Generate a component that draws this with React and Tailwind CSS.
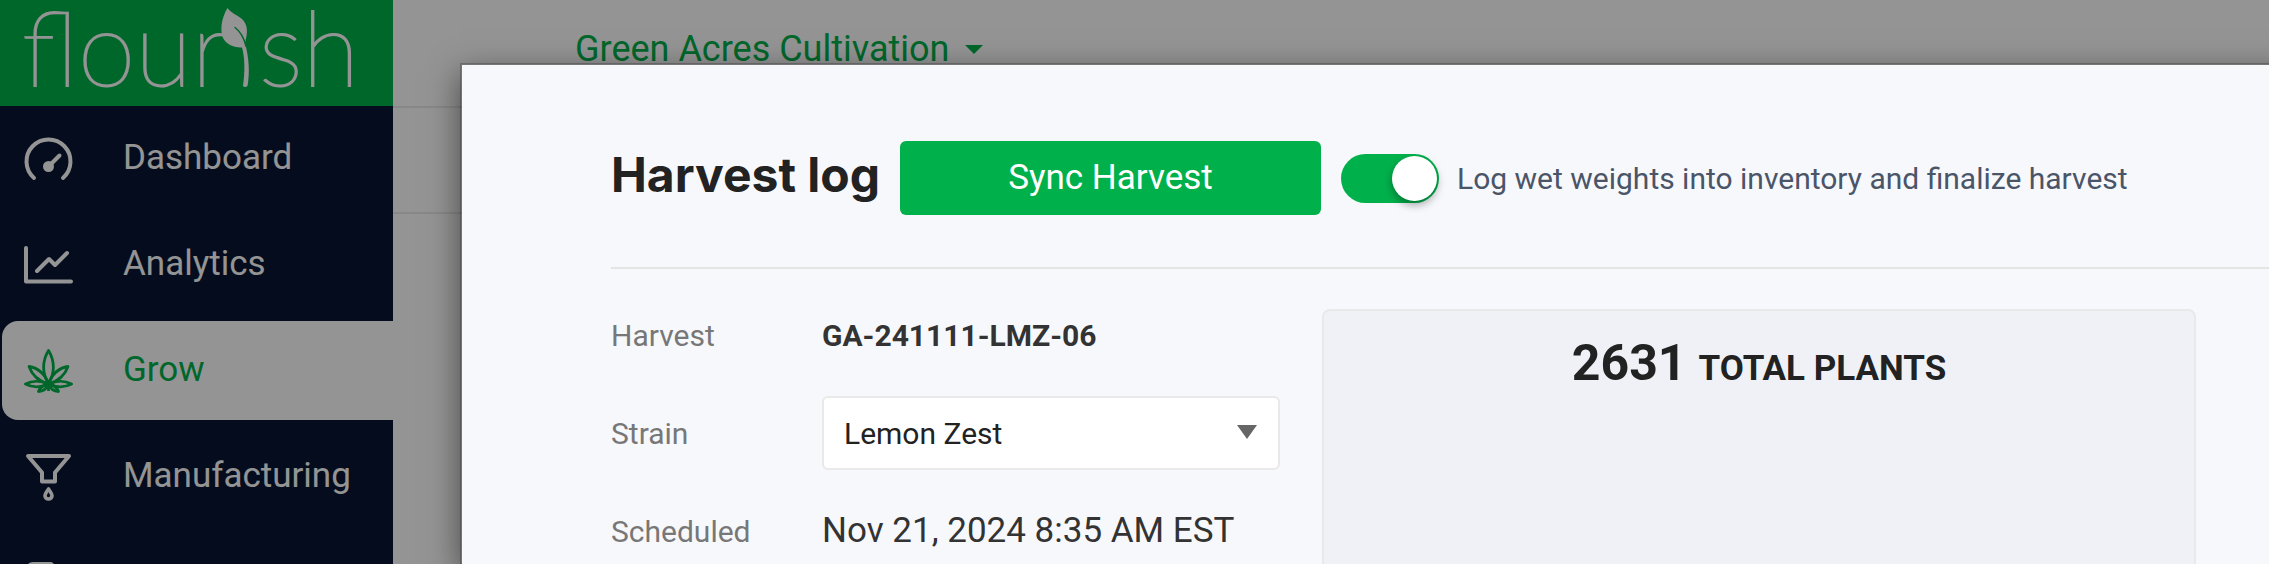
import { useState } from "react";

const GaugeIcon = () => (
  <svg width="49" height="44" viewBox="0 0 49 44" fill="none" stroke="currentColor" strokeWidth="4" strokeLinecap="round">
    <path d="M10 41 A22 22 0 1 1 39 41" />
    <path d="M25 29 L35.5 18.5" />
    <circle cx="24.5" cy="29.5" r="5.5" fill="currentColor" stroke="none" />
  </svg>
);

const ChartIcon = () => (
  <svg width="49" height="38" viewBox="0 0 49 38" fill="none" stroke="currentColor" strokeWidth="4" strokeLinecap="round" strokeLinejoin="round">
    <path d="M2 2 V35.5 H47" />
    <path d="M13 25 L25 13 L31 19 L43 7" />
  </svg>
);

const LeafIcon = () => (
  <svg width="49" height="44" viewBox="0 0 49 44" fill="none" stroke="currentColor" strokeWidth="2.8" strokeLinejoin="round">
    <path d="M24.5 34 C18 25 18 12 24.5 1.5 C31 12 31 25 24.5 34Z" />
    <path d="M24.5 35 C14 32 8 26 5 17.5 C14 19 21 25 24.5 35Z" />
    <path d="M24.5 35 C35 32 41 26 44 17.5 C35 19 28 25 24.5 35Z" />
    <path d="M24.5 35 C17 39 8 38.5 1.5 35 C8 31.5 17 31.5 24.5 35Z" />
    <path d="M24.5 35 C32 39 41 38.5 47.5 35 C41 31.5 32 31.5 24.5 35Z" />
    <path d="M24.5 35 C19 36 16 38.5 14.5 42.5 C19 42.5 22.5 40 24.5 35Z" />
    <path d="M24.5 35 C30 36 33 38.5 34.5 42.5 C30 42.5 26.5 40 24.5 35Z" />
    <path d="M24.5 31 V42" />
    <circle cx="24.5" cy="35" r="3.5" fill="currentColor" stroke="none" />
  </svg>
);

const FunnelIcon = () => (
  <svg width="49" height="48" viewBox="0 0 49 48" fill="none" stroke="currentColor" strokeWidth="4" strokeLinejoin="round">
    <path d="M4 3 H45 L31 19.5 V28.5 H18 V19.5 Z" />
    <path d="M24.5 36 C22 39.5 21 41 21 42.8 A3.5 3.2 0 0 0 28 42.8 C28 41 27 39.5 24.5 36Z" strokeWidth="3.6" />
  </svg>
);

const DocumentIcon = () => (
  <svg width="49" height="44" viewBox="0 0 49 44" fill="none" stroke="currentColor" strokeWidth="4" strokeLinejoin="round">
    <path d="M5 42 V7 Q5 3 9 3 H27 L36 12 V42 Z" />
  </svg>
);

const Logo = () => (
  <svg width="393" height="106" viewBox="0 0 393 106" role="img" aria-label="flourish" className="block fill-white font-['Lato'] text-[104px] font-thin">
    <g stroke="#fff" strokeWidth="2">
      <text x="22" y="86">flour</text>
      <text x="259" y="86">sh</text>
    </g>
    <path d="M227.500 8 C221 19 220 30 223 38 C226 44 234 48 242 47.500 C245 58 245 72 243 86 Q245 88 247.500 86 C250 72 249 58 245 43 C248 32 248 25 242 19 C237 15 231 13 227.500 8Z" />
    <path d="M235 27.500 C241 32 244 38 246 46" fill="none" stroke="#00b14b" strokeWidth="1.500" strokeLinecap="round" />
  </svg>
);

const navItems = [
  { label: "Dashboard", Icon: GaugeIcon },
  { label: "Analytics", Icon: ChartIcon },
  { label: "Grow", Icon: LeafIcon, active: true },
  { label: "Manufacturing", Icon: FunnelIcon },
  { label: "", Icon: DocumentIcon },
];

const Sidebar = () => (
  <aside className="w-[393px] shrink-0 bg-[#071632] text-white">
    <a href="#home" className="block h-[106px] bg-[#00b14b]">
      <Logo />
    </a>
    <nav className="flex flex-col gap-[7px] pt-[3px] pl-0.5">
      {navItems.map(({ label, Icon, active }, i) => (
        <a
          key={i}
          href="#nav"
          className={`flex h-[99px] items-center gap-[50px] rounded-l-2xl pl-[22px] text-[35px] ${
            active ? "bg-white text-[#00b14b]" : ""
          }`}
        >
          <Icon />
          <span>{label}</span>
        </a>
      ))}
    </nav>
  </aside>
);

const HarvestModal = () => {
  const [finalize, setFinalize] = useState(true);
  const [strain, setStrain] = useState("Lemon Zest");

  return (
    <div role="dialog" aria-labelledby="harvest-title" className="-mr-16 grow border-t-2 border-l-2 border-black/20 bg-[#f7f8fc] bg-clip-padding pt-[76px] pl-[149px] shadow-[0_10px_30px_rgba(0,0,0,0.5)]">
      <header className="flex items-center border-b-2 border-[#e4e4e4] pb-[52px]">
        <h1 id="harvest-title" className="mr-5 w-[269px] pb-1.5 font-['Inter'] text-[48px] leading-none font-bold whitespace-nowrap text-[#222]">
          Harvest log
        </h1>
        <button className="h-[74px] w-[421px] rounded-md bg-[#00b14b] text-[35px] text-white">
          Sync Harvest
        </button>
        <label className="ml-5 flex items-center gap-[18px] text-[30px] whitespace-nowrap text-[#4a5568]">
          <input type="checkbox" checked={finalize} onChange={(e) => setFinalize(e.target.checked)} className="peer sr-only" />
          <span className="flex h-[49px] w-[98px] justify-start rounded-full bg-gray-400 p-0.5 peer-checked:justify-end peer-checked:bg-[#00b14b]">
            <span className="size-[45px] rounded-full bg-white shadow-[0_4px_8px_rgba(0,0,0,0.35)]" />
          </span>
          Log wet weights into inventory and finalize harvest
        </label>
      </header>

      <div className="flex gap-[42px] pt-[17px] pr-[137px]">
        <dl className="w-[669px] shrink-0 text-[30px] text-[#333]">
          <div className="flex h-[98px] items-center">
            <dt className="w-[211px] text-[#777]">Harvest</dt>
            <dd className="font-bold">GA-241111-LMZ-06</dd>
          </div>
          <div className="flex h-[98px] items-center">
            <dt className="w-[211px] text-[#777]">
              <label htmlFor="strain">Strain</label>
            </dt>
            <dd className="relative grow">
              <select
                id="strain"
                value={strain}
                onChange={(e) => setStrain(e.target.value)}
                className="block h-[74px] w-full appearance-none rounded-md border-2 border-[#e9e9e9] bg-white px-5 text-[#222]"
              >
                <option>Lemon Zest</option>
              </select>
              <svg width="20" height="14" viewBox="0 0 20 14" className="pointer-events-none absolute top-[29px] right-[23px] fill-[#666]">
                <path d="M0 0 H20 L10 14Z" />
              </svg>
            </dd>
          </div>
          <div className="flex h-[98px] items-center">
            <dt className="w-[211px] text-[#777]">Scheduled</dt>
            <dd className="text-[35px]">Nov 21, 2024 8:35 AM EST</dd>
          </div>
        </dl>

        <section className="mt-[23px] h-[400px] grow rounded-lg border-2 border-[#e9e9e9] bg-[#eff1f6] pt-[15px] text-center font-bold text-[#222]">
          <span className="text-[50px]">2631</span>{" "}
          <span className="ml-2 text-[35px]">TOTAL PLANTS</span>
        </section>
      </div>
    </div>
  );
};

const App = () => (
  <div className="relative flex h-screen overflow-hidden bg-white font-['Roboto',sans-serif]">
    <Sidebar />
    <main className="grow">
      <div className="h-[108px] border-b-2 border-[#ebebeb] pt-[22px] pl-[182px]">
        <button className="flex items-center gap-4 text-[36px] text-[#00b14b]">
          Green Acres Cultivation
          <svg width="18" height="9" viewBox="0 0 18 9" className="fill-current">
            <path d="M0 0 H18 L9 9Z" />
          </svg>
        </button>
      </div>
      <div className="h-[106px] border-b-2 border-[#ebebeb]" />
    </main>

    <div className="absolute inset-0 flex overflow-hidden bg-black/42 pt-[63px] pl-[460px]">
      <HarvestModal />
    </div>
  </div>
);

export default App;
